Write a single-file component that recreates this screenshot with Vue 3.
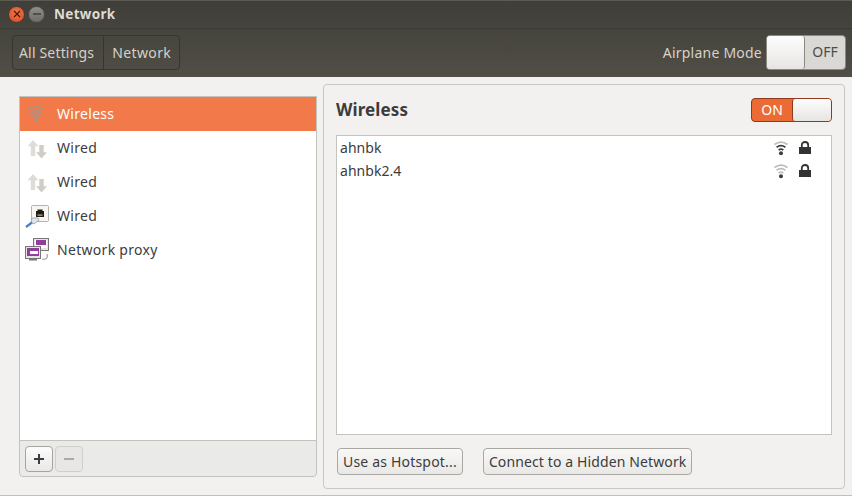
<script setup>
const nets = [
  { name: 'ahnbk', full: true },
  { name: 'ahnbk2.4', full: false },
]
</script>

<template>
  <div class="win">
    <header class="head">
      <div class="titlebar">
        <span class="wbtn close"><svg width="8" height="8" viewBox="0 0 8 8"><path d="M1 1l6 6M7 1l-6 6" stroke="#4a1a0c" stroke-width="1.3"/></svg></span>
        <span class="wbtn min"><svg width="10" height="8" viewBox="0 0 10 8"><path d="M1 4h8" stroke="#3c3b37" stroke-width="1.4"/></svg></span>
        <span class="title">Network</span>
      </div>
      <div class="toolbar">
        <div class="crumbs">
          <span class="crumb first">All Settings</span>
          <span class="crumb second">Network</span>
        </div>
        <div class="air">
          <span class="airlabel">Airplane Mode</span>
          <div class="airswitch">
            <span class="airknob"></span>
            <span class="airoff">OFF</span>
          </div>
        </div>
      </div>
    </header>

    <main class="body">
      <section class="left">
        <ul class="devs">
          <li class="dev sel">
            <svg class="ic" width="22" height="22" viewBox="0 0 22 22" fill="none" stroke="#a39488">
              <path d="M3.500 6.500c4.500-3.200 10.500-3.200 15 0" stroke-width="2"/>
              <path d="M5.500 10c3.500-2.400 7.500-2.400 11 0" stroke-width="2"/>
              <path d="M7.800 13.400c2-1.300 4.400-1.300 6.400 0" stroke-width="2"/>
              <circle cx="11" cy="17" r="2" fill="#a39488" stroke="none"/>
            </svg>
            <span>Wireless</span>
          </li>
          <li class="dev" v-for="n in 2" :key="n">
            <svg class="ic" width="22" height="22" viewBox="0 0 22 22">
              <path d="M8 3l5.500 6.200H10.200V19H5.800V9.200H2.500z" fill="#dedcd6"/>
              <path d="M16.500 21.500L22 15.300h-3.300V8h-4.400v7.300H11z" fill="#cfcdc6"/>
            </svg>
            <span>Wired</span>
          </li>
          <li class="dev">
            <svg class="ic" width="24" height="24" viewBox="0 0 24 24">
              <rect x="6.500" y="1.500" width="17" height="16" rx="1" fill="#f6f5f2" stroke="#b5b3ad"/>
              <path d="M11 7h1.500V5.500h5V7H19v6h-8z" fill="#1d1d1b"/>
              <rect x="12.500" y="10.500" width="5" height="1.200" fill="#d8b840"/>
              <path d="M7 14h6l1 2-5 4-3-2z" fill="#dfe3e8" stroke="#8d95a0" stroke-width=".7"/>
              <path d="M7 18.500l-6 4.500" stroke="#4a7fc9" stroke-width="2.200"/>
            </svg>
            <span>Wired</span>
          </li>
          <li class="dev">
            <svg class="ic" width="26" height="24" viewBox="0 0 26 24">
              <rect x="8.500" y=".5" width="15" height="12" fill="#e7e5e2" stroke="#77767a"/>
              <rect x="10" y="2" width="12" height="8" fill="#fff"/>
              <rect x="11" y="2" width="10" height="5" fill="#8f3f97"/>
              <rect x=".5" y="8.500" width="15" height="12" fill="#e7e5e2" stroke="#77767a"/>
              <rect x="2" y="10" width="12" height="8" fill="#8f3f97"/>
              <rect x="5" y="13" width="8" height="3" fill="#fff"/>
              <rect x="4" y="20.500" width="8" height="2" fill="#77767a"/>
              <path d="M17 21c4 1 6-1 5-5" fill="none" stroke="#9a9a98" stroke-width="1.200"/>
            </svg>
            <span>Network proxy</span>
          </li>
        </ul>
        <div class="listbar">
          <span class="sq on"><svg width="12" height="12" viewBox="0 0 12 12"><path d="M6 1v10M1 6h10" stroke="#3c3c3c" stroke-width="2"/></svg></span>
          <span class="sq off"><svg width="12" height="12" viewBox="0 0 12 12"><path d="M1 6h10" stroke="#a9a9a6" stroke-width="2"/></svg></span>
        </div>
      </section>

      <section class="right">
        <div class="rhead">
          <h2>Wireless</h2>
          <div class="onswitch">
            <span class="ontext">ON</span>
            <span class="onknob"></span>
          </div>
        </div>
        <ul class="nets">
          <li v-for="n in nets" :key="n.name" class="net">
            <span class="netname">{{ n.name }}</span>
            <span class="neticons">
              <svg width="16" height="16" viewBox="0 0 16 16" fill="none" :stroke="n.full ? '#3c3c3c' : '#bcbcbc'" stroke-width="1.700">
                <path d="M1.500 4.500c4-3 9-3 13 0" stroke="#bcbcbc"/>
                <path d="M3.600 7.300c2.800-2 6-2 8.800 0"/>
                <path d="M5.600 10c1.600-1.100 3.200-1.100 4.800 0"/>
                <circle cx="8" cy="13.300" r="2" fill="#3c3c3c" stroke="none"/>
              </svg>
              <svg width="14" height="14" viewBox="0 0 14 14">
                <path d="M3.800 6.500V4.200C3.800 2.200 5.100 1 7 1s3.200 1.200 3.200 3.200v2.300" fill="none" stroke="#333" stroke-width="1.800"/>
                <rect x="1" y="6" width="12" height="7" fill="#333"/>
              </svg>
            </span>
          </li>
        </ul>
        <div class="actions">
          <button class="btn hot">Use as Hotspot...</button>
          <button class="btn hid">Connect to a Hidden Network</button>
        </div>
      </section>
    </main>
  </div>
</template>

<style>
html, body { margin: 0; background: #f2f1f0; }
</style>

<style scoped>
.win {
  width: 852px;
  height: 496px;
  display: flex;
  flex-direction: column;
  overflow: hidden;
  box-sizing: border-box;
  border-bottom: 1px solid #c2c0b9;
  background: #f2f1f0;
  font-family: "Noto Sans", "Open Sans", sans-serif;
  font-size: 14px;
  color: #3c3c3c;
}
.head {
  height: 77px;
  flex: none;
  background: linear-gradient(#3f3e39, #504e45);
  box-shadow: inset 0 1px 0 #5c5b53;
}
.titlebar {
  height: 29px;
  display: flex;
  align-items: center;
  padding-left: 8px;
  box-sizing: border-box;
  border-bottom: 1px solid #3a3934;
}
.wbtn {
  width: 15px;
  height: 15px;
  border-radius: 50%;
  display: flex;
  align-items: center;
  justify-content: center;
}
.close { background: radial-gradient(circle at 50% 40%, #f07a4c, #d9471f); border: 1px solid #4a3a30; }
.min { margin-left: 3px; background: linear-gradient(#8f8e88, #6c6b65); border: 1px solid #4a4942; }
.title {
  margin-left: 9px;
  font-weight: 700;
  font-size: 13.500px;
  color: #dfdbd2;
  letter-spacing: .3px;
}
.toolbar {
  height: 48px;
  display: flex;
  align-items: center;
  justify-content: space-between;
  padding: 0 6px 0 12px;
}
.crumbs {
  display: flex;
  height: 33px;
  border: 1px solid #36352f;
  border-radius: 4px;
  margin-bottom: 2px;
}
.crumb {
  display: flex;
  align-items: center;
  color: #d6d2c8;
  font-size: 14px;
}
.first { padding: 0 9px 0 6px; letter-spacing: .17px; }
.second { border-left: 1px solid #36352f; padding: 0 8px; letter-spacing: .4px; }
.air { display: flex; align-items: center; gap: 4px; margin-bottom: 1px; }
.airlabel { color: #d6d2c8; font-size: 14px; letter-spacing: .23px; }
.airswitch {
  width: 80px;
  height: 35px;
  display: flex;
  border-radius: 4px;
  background: #d9d8d4;
  box-sizing: border-box;
  border: 1px solid #8a8982;
}
.airknob {
  width: 37px;
  background: linear-gradient(#fdfdfd, #e6e5e3);
  border-right: 1px solid #8a8982;
  border-radius: 3px;
}
.airoff { flex: 1; text-align: center; line-height: 32px; color: #4c4c4c; font-size: 14px; }

.body {
  flex: 1;
  display: flex;
  align-items: flex-start;
  padding: 7px 7px 0 19px;
  gap: 6px;
}
.left {
  width: 298px;
  height: 381px;
  margin-top: 12px;
  flex: none;
  box-sizing: border-box;
  border: 1px solid #c4c3bd;
  border-radius: 0 0 4px 4px;
  display: flex;
  flex-direction: column;
  background: #eaeae8;
}
.devs {
  list-style: none;
  margin: 0;
  padding: 0;
  flex: 1;
  background: #fff;
  border-bottom: 1px solid #c4c3bd;
}
.dev {
  height: 34px;
  box-sizing: border-box;
  padding: 0 0 2px 37px;
  display: flex;
  align-items: center;
  position: relative;
  color: #3c3c3c;
  letter-spacing: .3px;
}
.sel { background: #f27a4a; color: #fff; }
.ic { position: absolute; left: 5px; top: 50%; transform: translateY(-50%); }
.listbar {
  height: 35px;
  flex: none;
  display: flex;
  align-items: center;
  padding-left: 5px;
  gap: 2px;
}
.sq {
  width: 26px;
  height: 24px;
  border-radius: 4px;
  display: flex;
  align-items: center;
  justify-content: center;
}
.on { background: linear-gradient(#fcfcfc, #e9e8e6); border: 1px solid #a5a49e; }
.off { background: #e8e7e5; border: 1px solid #d0cfca; }

.right {
  width: 522px;
  height: 405px;
  box-sizing: border-box;
  border: 1px solid #c8c7c1;
  border-radius: 4px;
  padding: 0 12px;
  display: flex;
  flex-direction: column;
}
.rhead {
  height: 50px;
  flex: none;
  display: flex;
  align-items: center;
  justify-content: space-between;
}
h2 {
  margin: 0 0 2px;
  font-size: 17px;
  font-weight: 700;
  color: #3c3c3c;
  letter-spacing: .1px;
}
.onswitch {
  width: 81px;
  height: 24px;
  box-sizing: border-box;
  border: 1px solid #8f3a1c;
  border-radius: 4px;
  background: #ec6b35;
  display: flex;
}
.ontext { width: 40px; text-align: center; color: #fff; line-height: 22px; font-size: 14px; }
.onknob {
  flex: 1;
  background: linear-gradient(#fdfdfd, #e6e5e3);
  border-left: 1px solid #8f3a1c;
  border-radius: 3px;
}
.nets {
  list-style: none;
  margin: 0;
  padding: 0;
  height: 300px;
  flex: none;
  box-sizing: border-box;
  background: #fff;
  border: 1px solid #c4c3bd;
}
.net {
  height: 23px;
  display: flex;
  align-items: center;
  justify-content: space-between;
  padding: 0 19px 0 3px;
}
.netname { letter-spacing: .05px; }
.neticons { display: flex; align-items: center; gap: 9px; }
.actions {
  display: flex;
  gap: 20px;
  padding: 13px 0 0 1px;
}
.btn {
  height: 27px;
  box-sizing: border-box;
  padding: 0 5px;
  border: 1px solid #a9a8a2;
  border-radius: 4px;
  background: linear-gradient(#f8f8f7, #e9e8e6);
  font-family: inherit;
  font-size: 14px;
  color: #3c3c3c;
}
.hot { letter-spacing: .19px; }
.hid { letter-spacing: .12px; }
</style>
